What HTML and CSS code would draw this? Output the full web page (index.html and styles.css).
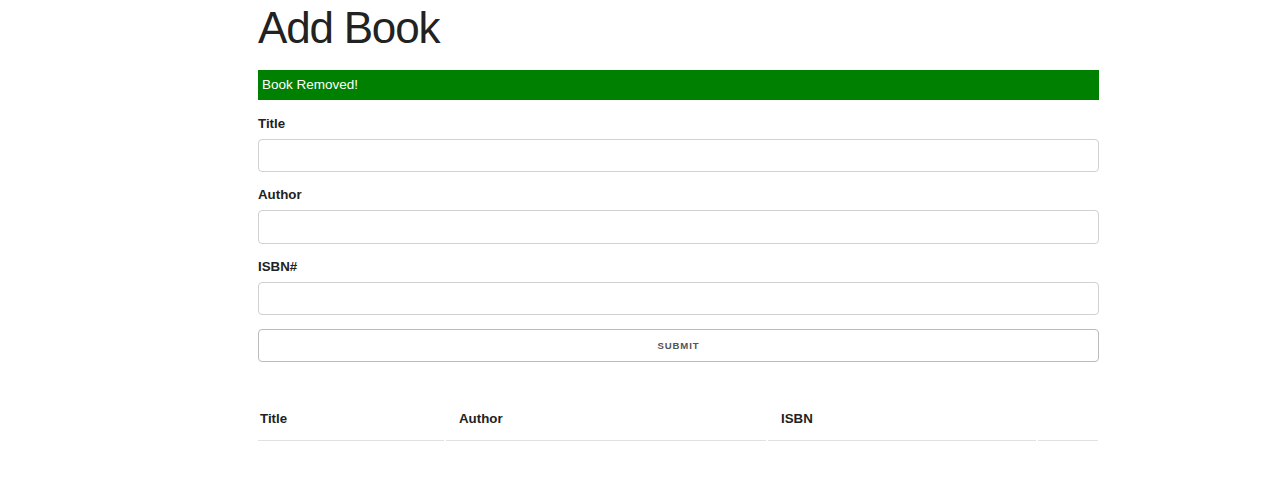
FILE: index.html
```html
<!DOCTYPE html>
<html lang="en">
<head>
<meta charset="utf-8">
<title>Add Book</title>
<link rel="stylesheet" href="styles.css">
</head>
<body>
<div class="container">
  <h1 class="title">Add Book</h1>
  <div class="alert">Book Removed!</div>
  <form class="book-form">
    <label class="field-label" for="title">Title</label>
    <input class="field-input" id="title" type="text">
    <label class="field-label" for="author">Author</label>
    <input class="field-input" id="author" type="text">
    <label class="field-label" for="isbn">ISBN#</label>
    <input class="field-input" id="isbn" type="text">
    <button class="submit-btn" type="button">Submit</button>
  </form>
  <table class="book-table">
    <thead>
      <tr>
        <th class="col-title">Title</th>
        <th class="col-author">Author</th>
        <th class="col-isbn">ISBN</th>
        <th class="col-actions"></th>
      </tr>
    </thead>
    <tbody></tbody>
  </table>
</div>
</body>
</html>
```

FILE: styles.css
```css
html, body {
  margin: 0;
  padding: 0;
  background: #fff;
}
body {
  font-family: "Liberation Sans", Arial, sans-serif;
  color: #222;
  font-size: 13.125px;
  line-height: 21px;
}
.container {
  width: 841px;
  margin-left: 258px;
}
.title {
  margin: 0 0 16px 0;
  padding-top: 1px;
  font-size: 44px;
  line-height: 53px;
  font-weight: 400;
  letter-spacing: -1.2px;
  color: #222;
}
.alert {
  background: #008000;
  color: #fff;
  height: 30px;
  line-height: 30px;
  padding: 0 4px;
  font-size: 13.5px;
  margin-bottom: 13.6px;
  box-sizing: border-box;
}
.book-form {
  display: flex;
  flex-direction: column;
  margin: 0;
}
.field-label {
  display: block;
  font-weight: 700;
  font-size: 13.3px;
  line-height: 20px;
  margin-bottom: 5px;
  color: #222;
}
.field-input {
  display: block;
  box-sizing: border-box;
  width: 100%;
  height: 33.25px;
  margin: 0 0 13.5px 0;
  padding: 5px 9px;
  border: 1px solid #d1d1d1;
  border-radius: 4px;
  background: #fff;
  font-family: inherit;
  font-size: 13px;
}
.submit-btn {
  display: block;
  box-sizing: border-box;
  width: 100%;
  height: 33.25px;
  margin: 0;
  padding: 0;
  border: 1px solid #bbb;
  border-radius: 4px;
  background: transparent;
  color: #555;
  font-family: inherit;
  font-size: 9.6px;
  font-weight: 700;
  letter-spacing: 0.9px;
  text-transform: uppercase;
}
.book-table {
  margin-top: 36px;
  margin-left: -2px;
  width: 844px;
  border-collapse: separate;
  border-spacing: 2px 0;
  table-layout: fixed;
}
.book-table th {
  text-align: left;
  font-weight: 700;
  font-size: 13.3px;
  line-height: 21px;
  padding: 10px 13px 11px 13px;
  border-bottom: 1px solid #e1e1e1;
  color: #222;
}
.book-table th.col-title {
  width: 186px;
  padding-left: 2px;
  box-sizing: border-box;
}
.book-table th.col-author {
  width: 320px;
  box-sizing: border-box;
}
.book-table th.col-isbn {
  width: 268px;
  box-sizing: border-box;
}
.book-table th.col-actions {
  width: 60px;
  box-sizing: border-box;
}
```
